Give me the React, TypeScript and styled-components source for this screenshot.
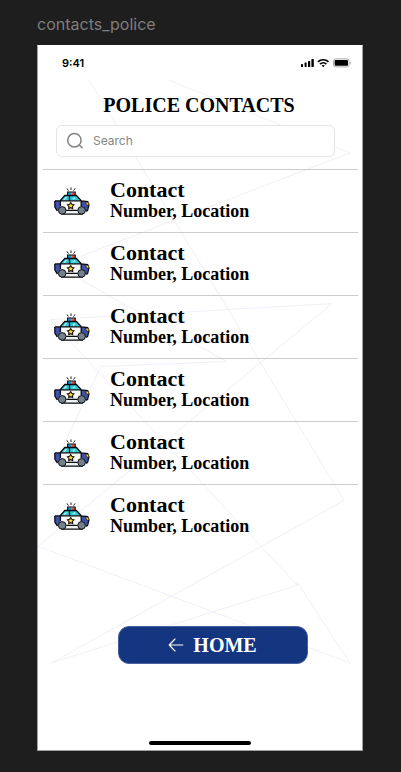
import React from "react";
import styled, { createGlobalStyle } from "styled-components";

const serif = `"Liberation Serif", "Times New Roman", serif`;
const sans = `Inter, "Liberation Sans", sans-serif`;

const GlobalStyle = createGlobalStyle`
  *, *::before, *::after { box-sizing: border-box; }
  body { margin: 0; background: #1e1e1e; }
`;

const Canvas = styled.div`
  display: flex;
  flex-direction: column;
  min-height: 100vh;
  padding: 12px 38px 21px 37px;
  background: #1e1e1e;
  font-family: ${sans};
`;

const FrameLabel = styled.div`
  height: 33px;
  color: #7d7d7d;
  font-size: 16px;
  line-height: 24px;
`;

const Phone = styled.main`
  position: relative;
  isolation: isolate;
  flex: 1;
  display: flex;
  flex-direction: column;
  background: #ffffff;
  border: 1px solid #a0a0a0;
  border-top-color: #ffffff;
  color: #000000;
`;

const Backdrop = styled.svg`
  position: absolute;
  inset: 0;
  z-index: -1;
  width: 100%;
  height: 100%;
  fill: none;
  stroke: #efeff9;
`;

const StatusBar = styled.div`
  display: flex;
  align-items: center;
  justify-content: space-between;
  height: 34px;
  padding: 0 10px 0 24px;
`;

const Clock = styled.span`
  font-size: 11px;
  line-height: 16px;
  font-weight: 600;
`;

const Title = styled.h1`
  margin: 13px 2px 8px 0;
  font-family: ${serif};
  font-size: 20px;
  line-height: 24px;
  font-weight: 700;
  text-align: center;
`;

const SearchBox = styled.label`
  display: flex;
  align-items: center;
  gap: 9px;
  height: 32px;
  margin: 0 27px 12px 18px;
  padding: 0 9px;
  background: #ffffff;
  border: 1px solid #e4e5e7;
  border-radius: 6px;
  color: #808080;
`;

const SearchInput = styled.input`
  flex: 1;
  min-width: 0;
  padding: 0;
  border: 0;
  outline: 0;
  background: transparent;
  font: 400 12px/20px ${sans};
  color: #333333;

  &::placeholder {
    color: #858585;
    opacity: 1;
  }
`;

const ContactList = styled.ul`
  margin: 0 4px 0 5px;
  padding: 0;
  list-style: none;
`;

const ContactRow = styled.li`
  display: flex;
  gap: 20px;
  height: 63px;
  padding: 8px 0 0 11px;
  border-top: 1px solid #cccccf;
`;

const CarDrawing = styled.svg`
  flex: none;
  width: 36px;
  height: 30px;
  margin-top: 9px;
`;

const ContactName = styled.h2`
  margin: 0;
  font-family: ${serif};
  font-size: 22px;
  line-height: 24px;
  font-weight: 700;
`;

const ContactDetail = styled.p`
  margin: 0;
  font-family: ${serif};
  font-size: 18px;
  line-height: 18px;
  font-weight: 700;
`;

const Actions = styled.div`
  display: flex;
  justify-content: center;
  margin-top: 79px;
  padding-left: 25px;
`;

const HomeButton = styled.button`
  display: flex;
  align-items: center;
  justify-content: center;
  gap: 9px;
  width: 190px;
  height: 38px;
  padding: 0;
  background: #14357f;
  border: 1px solid #4661a0;
  border-radius: 11px;
  color: #ffffff;
  font: 700 20px/24px ${serif};
  cursor: pointer;
`;

const HomeIndicator = styled.div`
  width: 102px;
  height: 4px;
  margin: auto auto 5px;
  border-radius: 2px;
  background: #000000;
`;

function BackgroundLines() {
  return (
    <Backdrop viewBox="0 0 325 705" preserveAspectRatio="none" aria-hidden="true">
      <path d="M51 34 307 455 13 618 260 540 12 274 295 258 0 501 313 618 260 537V540" />
      <path d="M131 34 313 107 18 220 189 316 63 321 28 395 17 418" />
    </Backdrop>
  );
}

function StatusIcons() {
  return (
    <svg width="52" height="12" viewBox="0 0 52 12" role="img" aria-label="Signal, wifi and battery">
      <rect x="1" y="7" width="2" height="3" rx="0.6" />
      <rect x="4.6" y="5.6" width="2" height="4.4" rx="0.6" />
      <rect x="8" y="4" width="2.2" height="6" rx="0.6" />
      <rect x="11.4" y="2" width="2.4" height="8" rx="0.6" />
      <g fill="none" stroke="#000" strokeWidth="1.7">
        <path d="M17.9 4.9a7.6 7.6 0 0 1 10.6 0" />
        <path d="M20 7.1a4.6 4.6 0 0 1 6.4 0" />
      </g>
      <path d="M21.6 8.6a2.4 2.4 0 0 1 3.2 0l-1.6 1.7z" />
      <rect x="33.5" y="1.9" width="15.6" height="8" rx="2.2" fill="#fff" stroke="#aaa" />
      <rect x="34.6" y="3" width="13.4" height="5.8" rx="1.1" />
      <path d="M50.2 4.3v3.2c1.3-.5 1.3-2.7 0-3.2z" fill="#aaa" />
    </svg>
  );
}

function SearchIcon() {
  return (
    <svg width="18" height="18" viewBox="0 0 18 18" fill="none" stroke="currentColor" strokeWidth="1.5" strokeLinecap="round" aria-hidden="true">
      <circle cx="8.4" cy="8.2" r="6.7" />
      <path d="m13.2 13 2.9 2.8" />
    </svg>
  );
}

function PoliceCar() {
  return (
    <CarDrawing viewBox="0 0 36 30" aria-hidden="true">
      <g fill="none" stroke="#222" strokeWidth="1" strokeLinecap="round">
        <path d="M17 .8v1.8M13.2 1.7l1 1.6M20.8 1.7l-1 1.6" />
      </g>
      <path d="M13.6 5.2h3.8v3.6h-3.8z" fill="#1b98d5" />
      <path d="M17.4 5.2h3.8v3.6h-3.8z" fill="#e9503f" />
      <path d="M13.6 8.6V5h7.6v3.6" fill="none" stroke="#08090c" strokeWidth="1.1" />
      <path d="M1 14 6 13.6l4.6-5.2h11.8l5 5.2 6.2.6 1.4 3.8-1.4 5.6-2.6 3H6L1.2 20z" fill="#f8f8f7" />
      <path d="M.8 14h5.4v5.4l-3 5L.9 20zM27.2 14l6 .6 1.4 3.4-1.4 5.4-2.2 1-3.8-5z" fill="#3f51ae" />
      <path d="M6.4 13.6 11 8.8h4.1v4.8zM15.9 8.8h6.3l4.6 4.8H15.9z" fill="#31c8d6" />
      <path d="m9.8 12.7 2.8-2.5M19 12.3l2-1.7" stroke="#a6f0f2" strokeWidth="1.4" />
      <path d="M15.5 8.6v5.2M.8 13.9H6l4.8-5.4h11.6l5 5.4 6.2.6 1.3 3.5-1.3 5.4-1.4 1M6 13.9h21.4M.8 13.9l.1 6.1 2.4 4M6.4 13.9v5.3M27.2 13.9v5.3" fill="none" stroke="#090b0e" strokeWidth="1.3" />
      <path d="M11.8 24h12.4v2.6H11.8z" fill="#f0f1f2" />
      <path d="M12.2 23.3h11.6M7 27.2h22" fill="none" stroke="#090b0e" strokeWidth="1.2" />
      <path d="M31.6 15.3h2.8l.6 2.8h-2.3z" fill="#fbd32d" stroke="#16120a" strokeWidth="0.6" />
      <path d="m16.7 15.5 1.1 1.8 2.1.5-1.4 1.6.2 2.2-2-.9-2 .9.2-2.2-1.4-1.6 2.1-.5z" fill="#fbd32d" stroke="#181409" strokeWidth="1.1" />
      <circle cx="8.2" cy="23.4" r="3.8" fill="#74808a" stroke="#111316" strokeWidth="1" />
      <circle cx="27.6" cy="23.4" r="3.8" fill="#74808a" stroke="#111316" strokeWidth="1" />
    </CarDrawing>
  );
}

function ArrowLeft() {
  return (
    <svg width="16" height="16" viewBox="0 0 16 16" fill="none" stroke="currentColor" strokeWidth="1.1" strokeLinecap="round" strokeLinejoin="round" aria-hidden="true">
      <path d="M14.8 8H1.2M7 2 1.2 8 7 14" />
    </svg>
  );
}

const contacts = Array.from({ length: 6 }, (_, id) => ({
  id,
  name: "Contact",
  detail: "Number, Location",
}));

export default function App() {
  return (
    <>
      <GlobalStyle />
      <Canvas>
        <FrameLabel>contacts_police</FrameLabel>
        <Phone>
          <BackgroundLines />
          <StatusBar>
            <Clock>9:41</Clock>
            <StatusIcons />
          </StatusBar>
          <Title>POLICE CONTACTS</Title>
          <SearchBox>
            <SearchIcon />
            <SearchInput type="search" placeholder="Search" aria-label="Search" />
          </SearchBox>
          <ContactList>
            {contacts.map((contact) => (
              <ContactRow key={contact.id}>
                <PoliceCar />
                <div>
                  <ContactName>{contact.name}</ContactName>
                  <ContactDetail>{contact.detail}</ContactDetail>
                </div>
              </ContactRow>
            ))}
          </ContactList>
          <Actions>
            <HomeButton type="button">
              <ArrowLeft />
              HOME
            </HomeButton>
          </Actions>
          <HomeIndicator />
        </Phone>
      </Canvas>
    </>
  );
}
